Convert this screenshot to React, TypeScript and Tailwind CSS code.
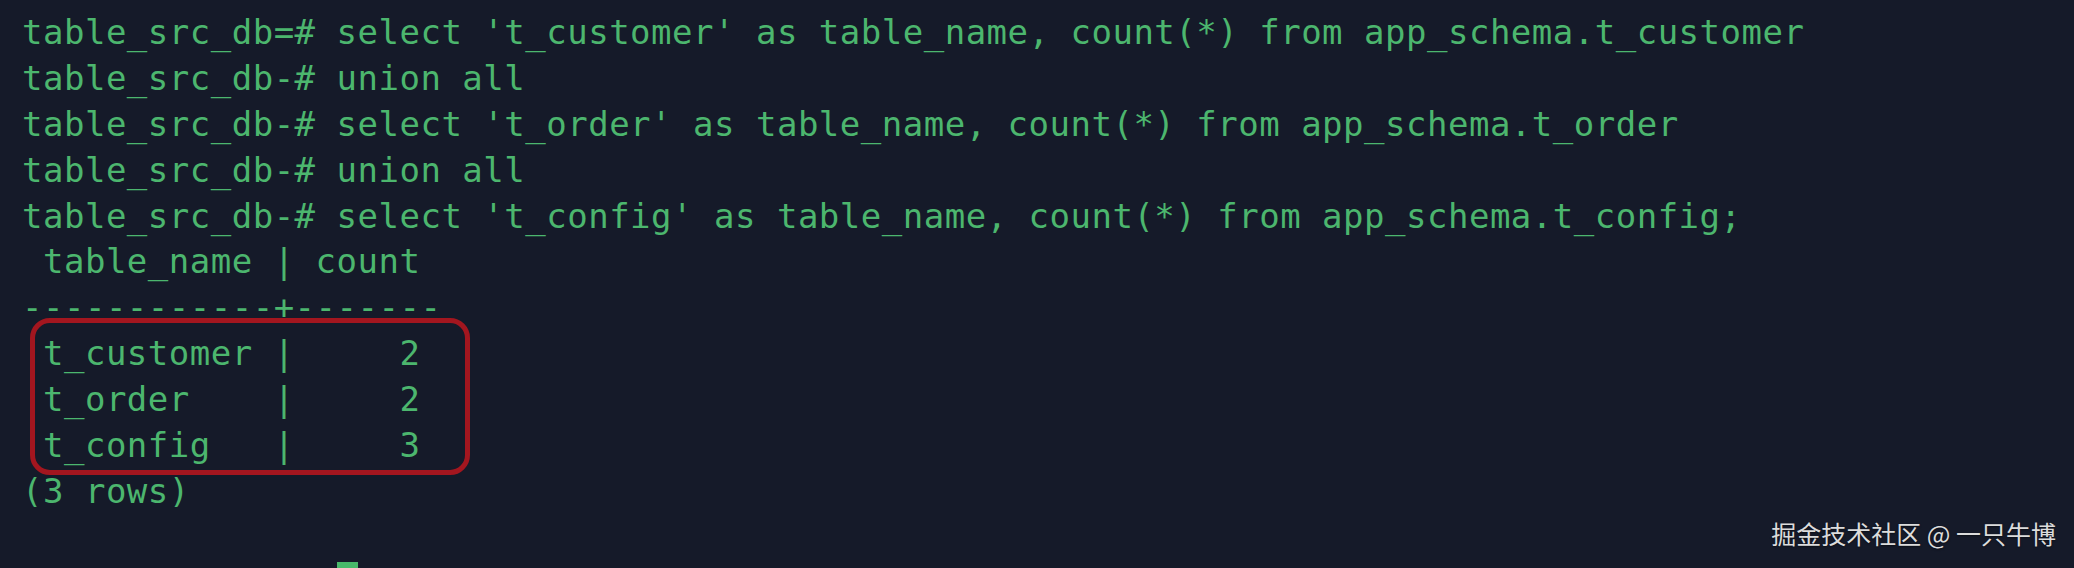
const lines = [
    "table_src_db=# select 't_customer' as table_name, count(*) from app_schema.t_customer",
    "table_src_db-# union all",
    "table_src_db-# select 't_order' as table_name, count(*) from app_schema.t_order",
    "table_src_db-# union all",
    "table_src_db-# select 't_config' as table_name, count(*) from app_schema.t_config;",
    " table_name | count",
    "------------+-------",
    " t_customer |     2",
    " t_order    |     2",
    " t_config   |     3",
    "(3 rows)",
    "",
];

export default function App() {
    return (
        <div className="relative w-[2074px] h-[568px] overflow-hidden bg-[#151a29]">
            <div className="pt-[10px] pl-[22px] text-[34px] leading-[45.9px] tracking-[0.5px] text-[#4cb66e] font-['DejaVu_Sans_Mono',monospace]">
                {lines.map((l, i) => (
                    <div key={i} className="h-[45.9px] whitespace-pre">{l}</div>
                ))}
                <div className="h-[45.9px] flex items-start whitespace-pre">
                    <span className="invisible">{"table_src_db=# "}</span>
                    <span className="mt-[1px] w-[21px] h-[44px] bg-[#48b96a]" />
                </div>
            </div>
            {/* annotation box around result rows */}
            <div className="absolute left-[30px] top-[318px] w-[440px] h-[157px] border-[5px] border-[#a3161f] rounded-[20px]" />
            <div className="absolute right-[18px] top-[516px] text-[25px] leading-[34px] text-[#dcdcdc] font-['Noto_Sans_CJK_SC',sans-serif] [text-shadow:0_1px_2px_rgba(0,0,0,0.5)]">
                掘金技术社区 @ 一只牛博
            </div>
        </div>
    );
}
